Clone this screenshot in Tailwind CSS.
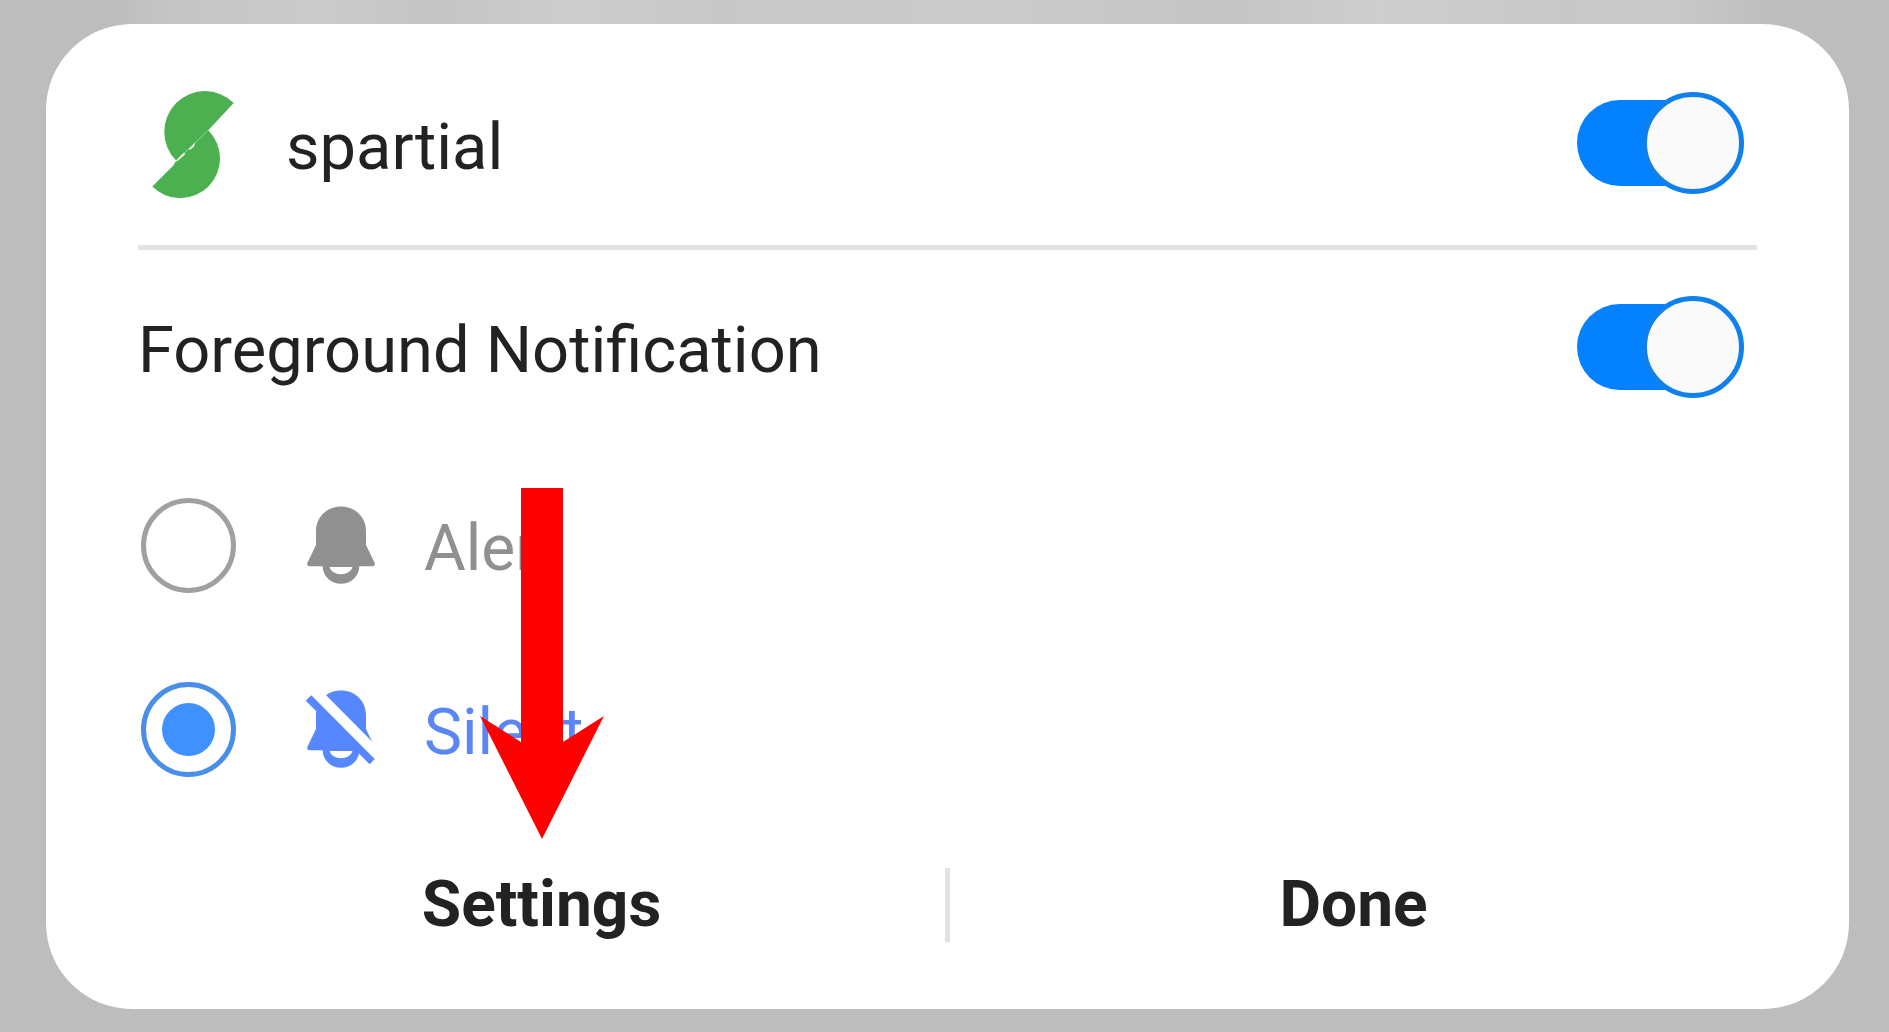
<!DOCTYPE html>
<html lang="en">
<head>
<meta charset="utf-8">
<meta name="viewport" content="width=device-width, initial-scale=1">
<title>Notification settings</title>
<script src="https://cdn.jsdelivr.net/npm/@tailwindcss/browser@4"></script>
</head>
<body class="min-h-screen bg-[#bdbdbd] bg-[linear-gradient(90deg,#bdbdbd_6%,#c5c5c5_9%,#cbcbcb_17%,#c5c5c5_23%,#cdcdcd_30%,#c8c8c8_38%,#cbcbcb_53%,#c5c5c5_65%,#cecece_73%,#c8c8c8_83%,#cacaca_88%,#bdbdbd_94%)] bg-[length:100%_24px] bg-no-repeat pt-6 pr-10 pb-[23px] pl-[46px] font-[Roboto,sans-serif] text-[64px] leading-[76px] text-[#222222]">
  <main class="rounded-[86px] bg-white px-[92px] pt-[68px] pb-[67px]">

    <header class="flex items-center border-b-5 border-[#e3e3e3] pr-[13px] pb-[51px]">
      <svg class="-mt-0.5 -mb-1.5 ml-3.5 h-[108px] w-[82px] shrink-0" viewBox="0 0 82 108" aria-hidden="true">
        <path fill="#4caf50" d="M81.700 12A40.500 40.500 0 1 0 24.200 69.600L56 39.500Z"/>
        <path fill="#4caf50" d="M56.300 39.300A39.700 39.700 0 0 1 .3 95.600L21 75L24 70Z"/>
        <path fill="none" stroke="#5fe08a" stroke-width="1" d="M1 95L20 76M32 62.500L55 40.500"/>
        <path fill="#eefbe6" d="M24 69.500L32 61.500L33 63.500L25 70.500ZM37 58L43.500 51L42 55.500L38 59Z"/>
      </svg>
      <label for="app" class="ml-[52px] flex-1 pt-2 text-[65px] leading-[76px]">spartial</label>
      <input id="app" type="checkbox" role="switch" checked class="relative h-[102px] w-[167px] shrink-0 appearance-none before:absolute before:top-2 before:left-0 before:h-[86px] before:w-[130px] before:rounded-full before:bg-[#0381fe] after:absolute after:top-0 after:right-0 after:size-[102px] after:rounded-full after:border-5 after:border-[#0f80ec] after:bg-[#fafafa]">
    </header>

    <div class="flex items-center pt-[46px] pr-[13px]">
      <label for="foreground" class="flex-1 pt-1.5 text-[65px] leading-[76px]">Foreground Notification</label>
      <input id="foreground" type="checkbox" role="switch" checked class="relative h-[102px] w-[167px] shrink-0 appearance-none before:absolute before:top-2 before:left-0 before:h-[86px] before:w-[130px] before:rounded-full before:bg-[#0381fe] after:absolute after:top-0 after:right-0 after:size-[102px] after:rounded-full after:border-5 after:border-[#0f80ec] after:bg-[#fafafa]">
    </div>

    <div role="radiogroup" aria-label="Notification style" class="mt-[99px] flex flex-col gap-[88px] pl-[3px]">
      <div class="flex h-24 items-center">
        <input id="alert" name="style" type="radio" class="size-[95px] shrink-0 appearance-none rounded-full border-[5px] border-[#a0a0a0]">
        <label for="alert" class="flex items-center text-[#909090]">
          <svg class="ml-[70px] h-[78px] w-[70px]" viewBox="0 0 70 78" fill="#909090" aria-hidden="true">
            <path d="M35 .5C49 .5 60 11 60 25V39L68.700 57Q69.500 60.300 66.500 60.300H53.300A18.300 17.500 0 0 1 16.700 60.300H3.500Q.5 60.300 1.300 57L10 39V25C10 11 21 .5 35 .5ZM23.500 61A11.700 9 0 0 0 46.500 61Z" fill-rule="evenodd"/>
          </svg>
          <span class="ml-12 pt-2">Alert</span>
        </label>
      </div>
      <div class="flex h-24 items-center">
        <input id="silent" name="style" type="radio" checked class="grid size-[95px] shrink-0 appearance-none place-items-center rounded-full border-[5px] border-[#4a8fe7] before:size-[53px] before:rounded-full before:bg-[#3f91ff]">
        <label for="silent" class="flex items-center text-[#5b86f4]">
          <svg class="ml-[70px] h-[78px] w-[70px]" viewBox="0 0 70 78" fill="#5787ff" aria-hidden="true">
            <path d="M35 .5C49 .5 60 11 60 25V39L68.700 57Q69.500 60.300 66.500 60.300H53.300A18.300 17.500 0 0 1 16.700 60.300H3.500Q.5 60.300 1.300 57L10 39V25C10 11 21 .5 35 .5ZM23.500 61A11.700 9 0 0 0 46.500 61Z" fill-rule="evenodd"/>
            <path fill="#fff" d="M4 5L4-11L70 55.500V72Z"/>
            <path d="M5.300 5.300L68.700 69L63.700 74.300L-.3 10.700Z"/>
          </svg>
          <span class="ml-12 pt-2">Silent</span>
        </label>
      </div>
    </div>

    <footer class="mt-[91px] flex items-center font-bold">
      <div class="relative flex flex-1 justify-center">
        <button type="button" class="-my-px">Settings</button>
        <!-- Pointer to the Settings button -->
        <svg class="pointer-events-none absolute bottom-full left-1/2 mb-[29px] h-[351px] w-[124px] -translate-x-1/2" viewBox="0 0 124 351" fill="#ff0000" aria-hidden="true">
          <path d="M41 0H83V254L124 228L62 351L0 228L41 254Z"/>
        </svg>
      </div>
      <div class="h-[74px] w-[5px] bg-[#e2e2e2]"></div>
      <div class="flex flex-1 justify-center">
        <button type="button" class="-my-px">Done</button>
      </div>
    </footer>
  </main>
</body>
</html>
